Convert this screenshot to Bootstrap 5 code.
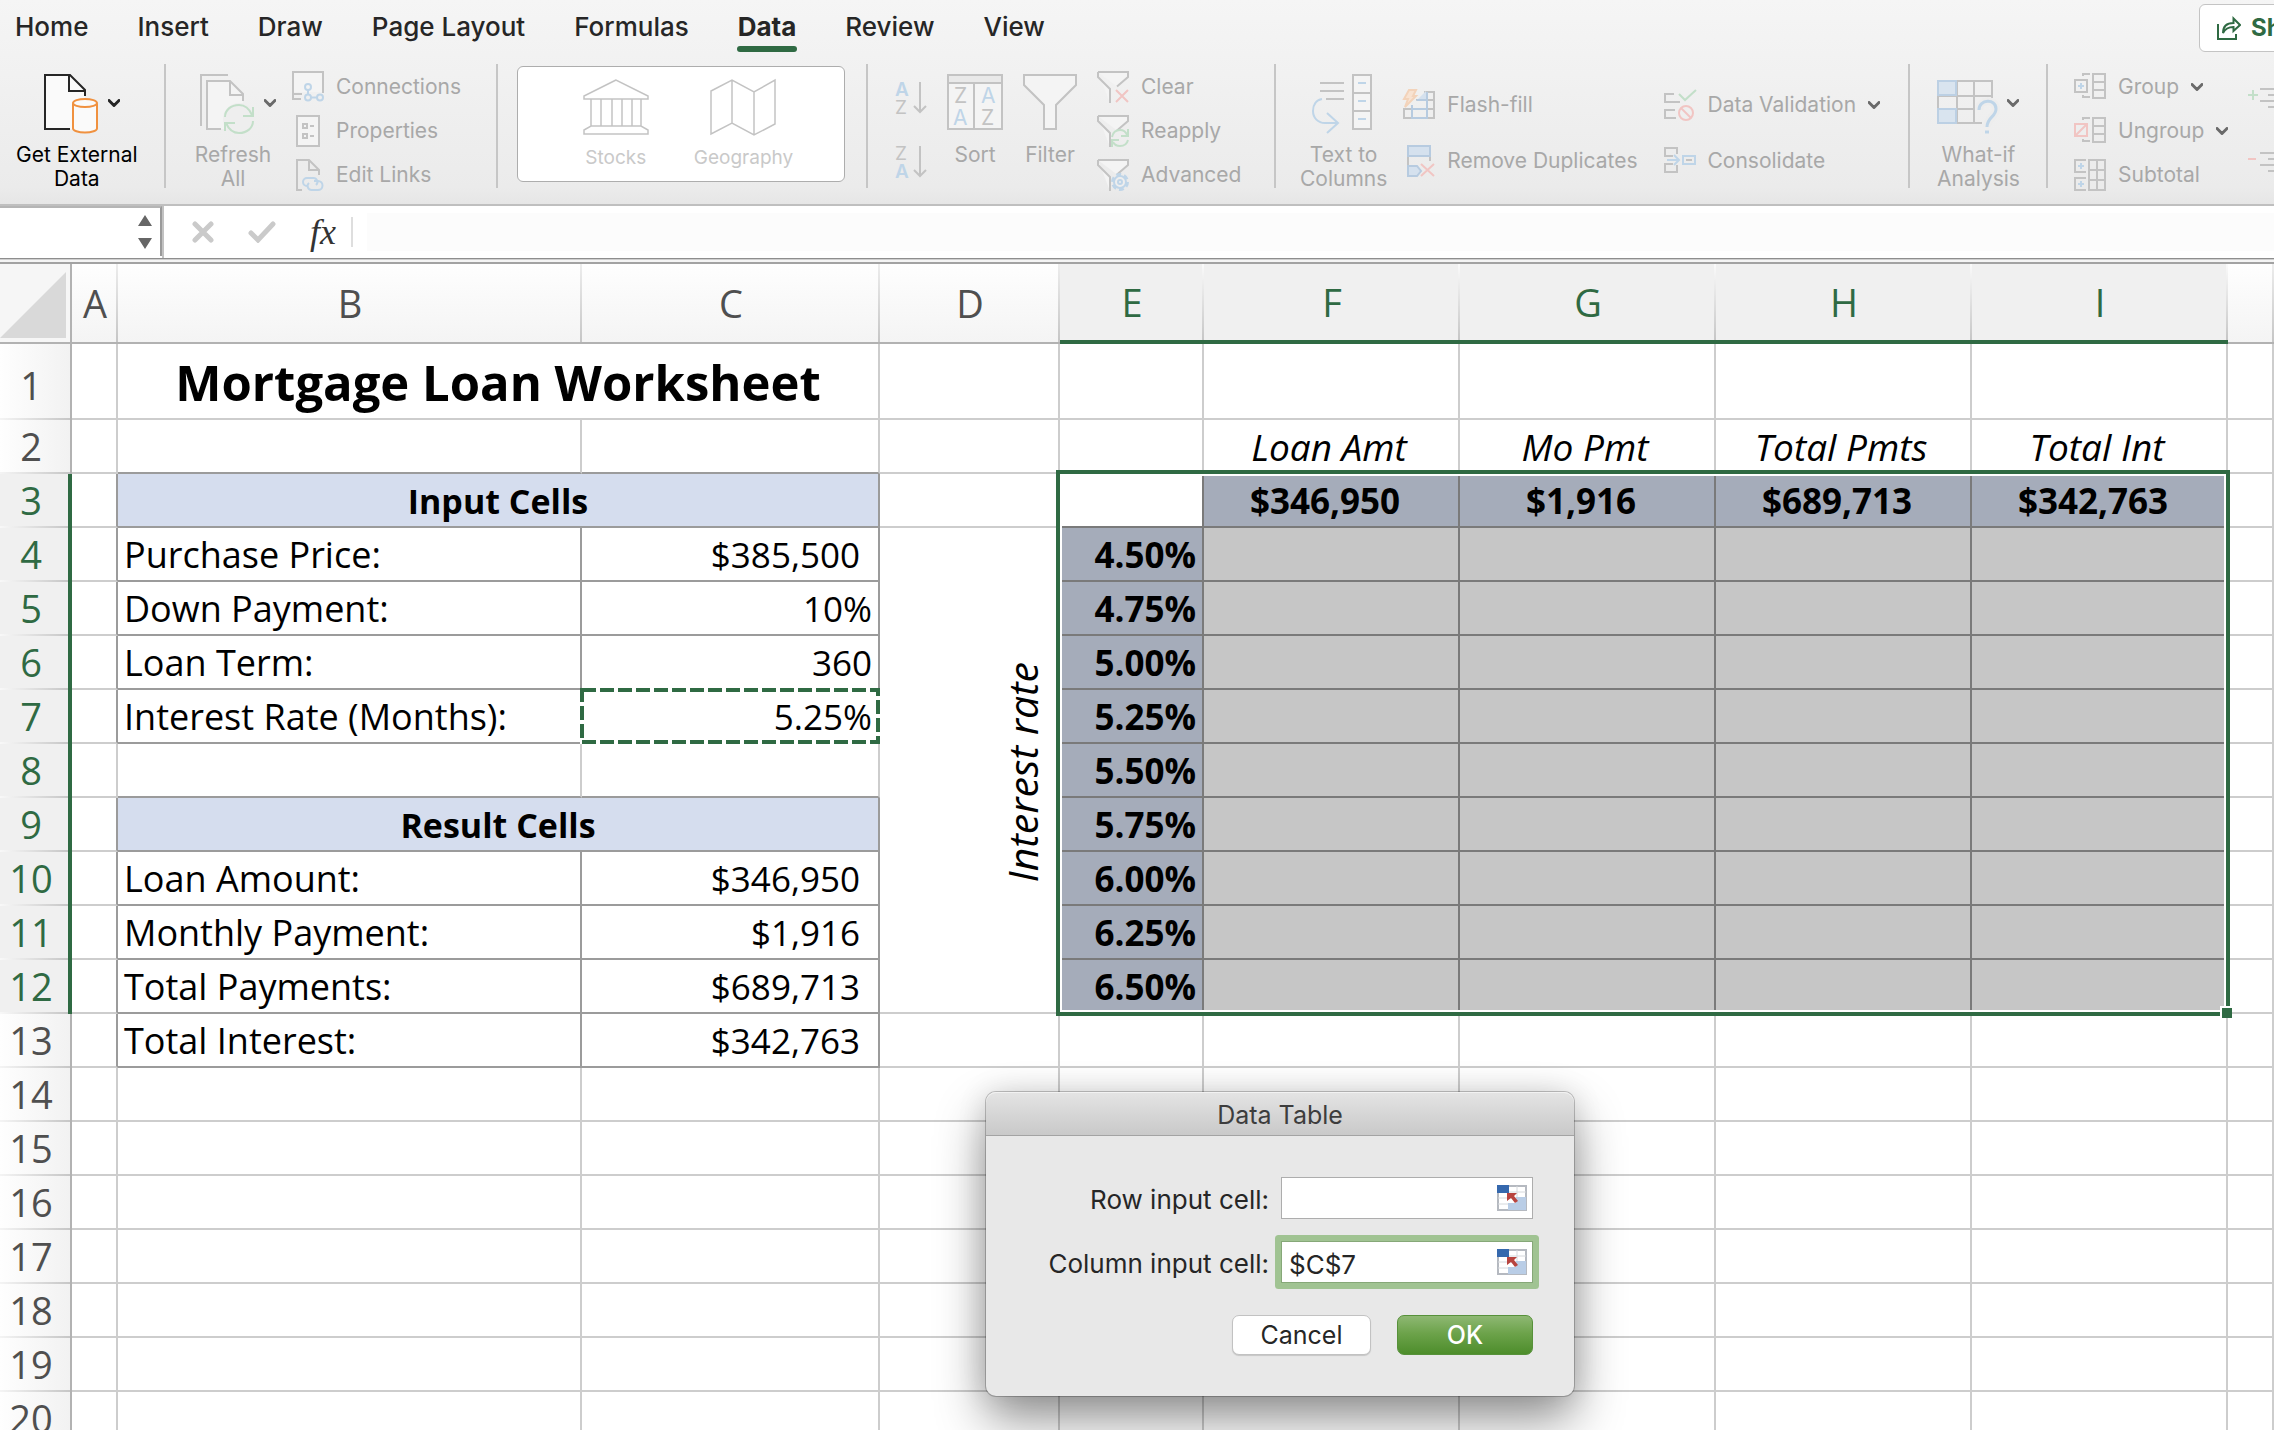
<!DOCTYPE html>
<html lang="en">
<head>
<meta charset="utf-8">
<meta name="viewport" content="width=device-width, initial-scale=1">
<title>Mortgage Loan Worksheet</title>
<link href="https://cdn.jsdelivr.net/npm/bootstrap@5.3.0/dist/css/bootstrap.min.css" rel="stylesheet">
<script src="https://cdn.jsdelivr.net/npm/bootstrap@5.3.0/dist/js/bootstrap.bundle.min.js"></script>
<style>
  :root { --xl: #2f6a43; --off: #a8a8a8; --ico: #c3c3c3; }
  html, body { height: 100%; overflow: hidden; }
  body { font-family: Inter, "Liberation Sans", sans-serif; color: #262626; background: #fff; }
  button { font-family: inherit; }

  /* ribbon */
  .ribbon { background: linear-gradient(#f5f5f5, #f0f0f0 45%, #ebebeb 92%, #e6e6e6); border-bottom: 2px solid #bfbfbf; overflow: hidden; height: 206px; }
  .tabs { height: 64px; gap: 49px; padding-left: 15px; }
  .tabs .nav-link { padding: 0; height: 54px; line-height: 54px; font-size: 26px; font-weight: 500; color: #262626; white-space: nowrap; }
  .tabs .nav-link.active { font-weight: 700; position: relative; }
  .tabs .nav-link.active::after { content: ""; position: absolute; left: -1px; right: -1px; bottom: 2px; height: 6px; border-radius: 3px; background: var(--xl); }
  .share { height: 48px; width: 150px; margin: 4px -75px 0 auto; padding: 0 0 0 17px; gap: 10px; border: 1px solid #c4c4c4; border-radius: 6px; background: #fff; color: var(--xl); font-size: 24px; font-weight: 700; }

  .tools { height: 124px; }
  .grp { border-right: 2px solid #c6c6c6; flex: none; height: 124px; }
  .tool { border: 0; background: none; padding: 0; color: var(--off); font-size: 21px; line-height: 24px; white-space: nowrap; flex: none; text-align: left; }
  .big { display: flex; flex-direction: column; align-items: center; align-self: flex-start; text-align: center; padding-top: 10px; }
  .big .pic { height: 69px; display: flex; gap: 10px; align-items: flex-start; }
  .big .pic .chev { margin-top: 25px; }
  .stack3 { display: flex; flex-direction: column; gap: 12px; }
  .stack3 .tool, .stack2 .tool { display: flex; align-items: center; gap: 12px; height: 32px; }
  .stack2 { display: flex; flex-direction: column; gap: 24px; padding-top: 25px; }
  .stack3 { padding-top: 7px; }
  .on { color: #000; }
  .chev { width: 12px; height: 8px; fill: none; stroke: #6a6a6a; stroke-width: 3; stroke-linecap: round; stroke-linejoin: round; overflow: visible; }
  .on .chev { stroke: #262626; }
  .types { width: 328px; height: 116px; margin: 2px 21px 0 19px; padding-left: 14px; gap: 45px; border: 1px solid #adadad; border-radius: 6px; background: #fff; }
  .types .tool { color: #c9c9c9; font-size: 19px; padding-top: 12px; }
  .types .ic { margin-bottom: 11px; }
  svg { display: block; flex: none; }
  .ic { fill: none; stroke: var(--ico); stroke-width: 2; overflow: visible; }
  .ic text { stroke: none; fill: var(--ico); font-family: Inter, sans-serif; }

  .g1 { width: 166px; padding-left: 16px; }
  .g1 .pic { padding-left: 10px; }
  .g2 { width: 332px; padding-left: 24px; gap: 16px; }
  .g2 .pic { padding-left: 10px; }
  .g3 { width: 370px; }
  .g4 { width: 408px; padding-left: 27px; gap: 20px; }
  .g5 { width: 634px; padding-left: 24px; }
  .g5 .pic { padding-right: 4px; }
  .g6 { width: 138px; padding-left: 27px; }
  .g7 { padding-left: 26px; gap: 20px; }
  .pair { gap: 32px; padding-top: 18px; }

  /* formula bar */
  .fbar { height: 53px; border-bottom: 1px solid #8e8e8e; background: #fff; }
  .namebox { width: 164px; border-right: 2px solid #c2c2c2; }
  .nameinner { height: 50px; border-top: 2px solid #b5b5b5; border-right: 2px solid #9a9a9a; padding-right: 8px; }
  .nameinner input { border: 0; background: none; width: 120px; font-size: 24px; }
  .fbar input:focus { outline: 0; }
  .fxbtn { border: 0; background: none; padding: 0; }
  .fx { font-family: "Liberation Serif", serif; font-weight: 400; font-size: 36px; line-height: 40px; color: #333; }
  .formula { border: 0; background: #fcfcfc; flex: 1 1 0; height: 38px; font-size: 24px; }
  .fsep { width: 2px; height: 30px; background: #dedede; }
  .rail { height: 5px; border-bottom: 2px solid #a2a2a2; border-top: 1px solid #cfcfcf; background: #f4f4f4; }

  /* sheet */
  .sheet { position: relative; font-family: "Open Sans", "Liberation Sans", sans-serif; }
  .gridtab { table-layout: fixed; width: 100%; border-collapse: separate; border-spacing: 0; color: #000; font-size: 35px; line-height: 44px; }
  .gridtab tr { height: 54px; }
  .gridtab td { border-right: 2px solid #cdcdcd; border-bottom: 2px solid #cdcdcd; padding: 2px 6px 0 6px; white-space: nowrap; height: 54px; vertical-align: middle; }
  .gridtab th { font-weight: 400; font-size: 38px; text-align: center; color: #4f4f4f; padding: 0; }
  .gridtab thead tr, .gridtab thead th { height: 80px; }
  .gridtab thead th { background: linear-gradient(#ededed, #c6c6c6) right / 2px 100% no-repeat, linear-gradient(#fefefe, #f4f4f4); border-bottom: 2px solid #b2b2b2; }
  .gridtab thead th.hot { background: linear-gradient(#fafafa, #c6c6c6) right / 2px 100% no-repeat, #f0f0f0; border-bottom: 4px solid var(--xl); color: var(--xl); }
  .gridtab tbody th { padding: 0 8px 2px 0; background: linear-gradient(90deg, #f4f4f4, #c6c6c6) bottom / 100% 2px no-repeat, linear-gradient(90deg, #fefefe, #f2f2f2); border-right: 2px solid #b2b2b2; }
  .gridtab tbody th.hot { background: linear-gradient(90deg, #f8f8f8, #c6c6c6) bottom / 100% 2px no-repeat, #f0f0f0; border-right: 4px solid var(--xl); padding-right: 6px; color: var(--xl); }
  .gridtab tr.tall, .gridtab tr.tall td { height: 76px; }
  .gridtab tr.tall th { padding-top: 8px; }
  .gridtab thead th.corner { border-right: 2px solid #b2b2b2; background: #f6f6f6; vertical-align: bottom; }
  .gridtab .rt { border-right-color: #9b9b9b; }
  .gridtab .bt { border-bottom-color: #9b9b9b; }
  .gridtab .band { background: #d5ddee; font-size: 34px; font-weight: 700; text-align: center; }
  .gridtab .title { font-size: 49px; font-weight: 700; text-align: center; line-height: 60px; }
  .gridtab .lbl { font-size: 36px; }
  .gridtab .num { text-align: right; }
  .gridtab .cur { text-align: right; padding-right: 18px; }
  .gridtab .cap { font-size: 37px; text-align: center; font-style: italic; padding-right: 10px; }
  .gridtab .sel { background: #c6c6c6; border-color: #7a7a7a; }
  .gridtab .key { background: #a5acba; border-color: #7a7a7a; font-weight: 700; text-align: right; }
  .gridtab .keytop { text-align: center; padding-right: 18px; }
  .gridtab .blank { background: #fff; }
  .gridtab .vert { vertical-align: middle; padding: 4px 14px 0 0; }
  .vert span { writing-mode: vertical-rl; transform: rotate(180deg); font-style: italic; font-size: 41px; display: block; margin-left: auto; width: 44px; text-align: center; }
  .ref { position: relative; }
  .ants { position: absolute; left: -2px; top: -2px; overflow: visible; }
  .selbox { position: absolute; left: 1056px; top: 206px; width: 1174px; height: 546px; border: 4px solid var(--xl); box-shadow: inset 0 0 0 2px #fff; pointer-events: none; }
  .selbox::after { content: ""; position: absolute; right: -6px; bottom: -6px; width: 12px; height: 12px; background: var(--xl); border: 2px solid #fff; border-width: 2px 0 0 2px; }

  /* dialog */
  .dlg { position: absolute; left: 986px; top: 828px; width: 588px; height: 304px; border-radius: 10px; background: #e8e8e8; box-shadow: 0 0 0 1px rgba(0,0,0,.22), 0 24px 50px rgba(0,0,0,.42), 0 0 30px rgba(0,0,0,.12); font-family: Inter, "Liberation Sans", sans-serif; font-size: 26px; }
  .dlghead { height: 44px; line-height: 46px; text-align: center; font-size: 25px; font-weight: 400; margin: 0; color: #3d3d3d; border-radius: 10px 10px 0 0; background: linear-gradient(#e4e4e4, #c9c9c9); border-bottom: 1px solid #a3a3a3; box-shadow: inset 0 1px 0 #f2f2f2; }
  .dlgbody { padding: 41px 41px 0 0; }
  .field { display: flex; justify-content: flex-end; align-items: center; gap: 12px; height: 42px; margin-bottom: 22px; }
  .field label { line-height: 42px; padding-top: 4px; }
  .inwrap { position: relative; width: 252px; height: 42px; }
  .inwrap input { width: 252px; height: 42px; border: 1px solid #adadad; border-radius: 0; background: #fff; padding: 4px 44px 0 7px; font-size: 26px; color: #262626; }
  .inwrap input:focus { outline: 0; }
  .inwrap.live input { border-color: #86a878; }
  .inwrap.live { box-shadow: 0 0 0 6px #a0c392; border-radius: 1px; }
  .pick { position: absolute; right: 6px; top: 8px; border: 0; padding: 0; background: none; }
  .acts { display: flex; justify-content: flex-end; gap: 26px; padding-top: 10px; }
  .mbtn { height: 40px; border-radius: 7px; padding: 1px 0 0; font-size: 25px; line-height: 37px; }
  .mcancel { width: 139px; background: #fff; border: 1px solid #c2c2c2; box-shadow: 0 1px 1px rgba(0,0,0,.15); color: #262626; }
  .mok { width: 136px; color: #fff; font-weight: 500; border: 1px solid #57913a; background: linear-gradient(#8eb873, #6da34b 45%, #4d8d2b); }
</style>
</head>
<body class="d-flex flex-column">

<svg width="0" height="0" class="position-absolute" aria-hidden="true">
  <symbol id="chev" viewBox="0 0 12 8"><path d="M1 1.5 6 6.5 11 1.5"/></symbol>
  <symbol id="funnel" viewBox="0 0 32 32"><path fill="#f4f4f4" d="M1 1h30v5L20 15.500M1 1v5l12 12v14"/></symbol>
</svg>

<header class="ribbon flex-shrink-0">
  <nav class="nav tabs flex-nowrap" aria-label="Ribbon tabs">
    <a class="nav-link" href="#">Home</a>
    <a class="nav-link" href="#">Insert</a>
    <a class="nav-link" href="#">Draw</a>
    <a class="nav-link" href="#">Page Layout</a>
    <a class="nav-link" href="#">Formulas</a>
    <a class="nav-link active" href="#" aria-current="page">Data</a>
    <a class="nav-link" href="#">Review</a>
    <a class="nav-link" href="#">View</a>
    <button type="button" class="share d-flex align-items-center flex-shrink-0">
      <svg width="24" height="24" viewBox="0 0 24 24" fill="none" stroke="#2f6a43" stroke-width="2"><path d="M1 8v15h18v-5M6 17c0-7 4-10 10.500-10V2.500L23 9l-6.500 6v-4C11 11 8 13 6 17z"/></svg>
      Share
    </button>
  </nav>

  <div class="tools d-flex">
    <div class="grp g1 d-flex">
      <button type="button" class="tool big on">
        <span class="pic">
          <svg width="54" height="60" viewBox="0 0 54 60" fill="none" stroke-width="2"><path fill="#fafafa" stroke="none" d="M1 1h25l15 15v39H1z"/><path stroke="#262626" d="M26 55H1V1h25l15 15v6M25 1v16h16"/><path fill="#fafafa" stroke="#f0913f" d="M29 29.500v25c0 2 5 4 12 4s12-2 12-4v-25"/><ellipse cx="41" cy="29" rx="12" ry="4" fill="#fafafa" stroke="#f0913f"/></svg>
          <svg class="chev"><use href="#chev"/></svg>
        </span>
        Get External<br>Data
      </button>
    </div>

    <div class="grp g2 d-flex">
      <button type="button" class="tool big" disabled>
        <span class="pic">
          <svg class="ic" width="54" height="60" viewBox="0 0 54 60"><path d="M1 52V1h27"/><path fill="#f4f4f4" stroke="none" d="M7 7h23l13 15v33H7z"/><path d="M21 55H7V7h23l13 13v7M30 7v14h13"/><circle cx="39" cy="45" r="16" fill="#eee" stroke="none"/><path stroke="#c3dfc9" d="M25 43c0-7 6-12 14-12 6 0 10 3 13 10M53 33v9h-10M53 47c0 7-6 12-14 12-6 0-10-3-13-10M25 57v-8h10"/></svg>
          <svg class="chev"><use href="#chev"/></svg>
        </span>
        Refresh<br>All
      </button>
      <div class="stack3">
        <button type="button" class="tool" disabled>
          <svg class="ic" width="32" height="32" viewBox="0 0 32 32"><path fill="#f4f4f4" stroke="none" d="M1 1h30v20H1z"/><path d="M9 28H1V1h30v21M1 23h9"/><g stroke="#bfd5e8"><path d="M16 19v4M19 26.500h6"/><circle cx="16" cy="16" r="3"/><circle cx="16" cy="26.500" r="3"/><circle cx="28" cy="26.500" r="3"/></g></svg>
          Connections
        </button>
        <button type="button" class="tool" disabled>
          <svg class="ic" width="32" height="32" viewBox="0 0 32 32"><path fill="#f4f4f4" d="M5 1h22v30H5z"/><path d="M11 9h4v4h-4zM11 19h4v4h-4zM18 11h4M18 21h4"/></svg>
          Properties
        </button>
        <button type="button" class="tool" disabled>
          <svg class="ic" width="32" height="32" viewBox="0 0 32 32"><path d="M10 31H5V1h12l10 10v5M17 1v10h10"/><g stroke="#bfd5e8"><path d="M16 27h-1a4 4 0 0 1 0-8h6a4 4 0 0 1 3 7M22 22h4a4.500 4.500 0 0 1 0 9h-6a4 4 0 0 1-3-7"/></g></svg>
          Edit Links
        </button>
      </div>
    </div>

    <div class="grp g3">
      <div class="types d-flex justify-content-center">
        <button type="button" class="tool d-flex flex-column align-items-center" disabled>
          <svg class="ic" width="66" height="56" viewBox="0 0 66 56"><path stroke-width="1.500" d="M33 1 1 17v3h64v-3zM1 55v-4l7-4h50l7 4v4zM8 20v27M18 20v27M29 20v27M39 20v27M49 20v27M58 20v27"/></svg>
          <span>Stocks</span>
        </button>
        <button type="button" class="tool d-flex flex-column align-items-center" disabled>
          <svg class="ic" width="66" height="56" viewBox="0 0 66 56"><path stroke-width="1.500" d="M1 12 22 1l22 12L65 1v44L44 56 22 44 1 55zM22 1v43M44 13v43"/></svg>
          <span>Geography</span>
        </button>
      </div>
    </div>

    <div class="grp g4 d-flex">
      <div class="pair d-flex flex-column">
        <button type="button" class="tool" aria-label="Sort ascending" disabled>
          <svg class="ic" width="32" height="32" viewBox="0 0 32 32"><text x="0" y="14" font-size="19" font-weight="600" style="fill:#bfd5e8">A</text><text x="0" y="32" font-size="19">Z</text><path d="M25 0v30M19 24l6 6 6-6"/></svg>
        </button>
        <button type="button" class="tool" aria-label="Sort descending" disabled>
          <svg class="ic" width="32" height="32" viewBox="0 0 32 32"><text x="0" y="14" font-size="19">Z</text><text x="0" y="32" font-size="19" font-weight="600" style="fill:#bfd5e8">A</text><path d="M25 0v30M19 24l6 6 6-6"/></svg>
        </button>
      </div>
      <button type="button" class="tool big" disabled>
        <span class="pic"><svg class="ic" width="56" height="56" viewBox="0 0 56 56"><path fill="#f4f4f4" d="M1 1h54v54H1z"/><path fill="#e9e9e9" d="M1 1h54v8H1zM27 9v46"/><text x="7" y="29" font-size="21">Z</text><text x="6" y="51" font-size="21" style="fill:#bfd5e8">A</text><text x="34" y="29" font-size="21" style="fill:#bfd5e8">A</text><text x="34" y="51" font-size="21">Z</text></svg></span>
        Sort
      </button>
      <button type="button" class="tool big" disabled>
        <span class="pic"><svg class="ic" width="54" height="56" viewBox="0 0 54 56"><path fill="#f4f4f4" d="M1 1h52v10L33 31v24H21V31L1 11z"/></svg></span>
        Filter
      </button>
      <div class="stack3">
        <button type="button" class="tool" disabled>
          <svg class="ic" width="32" height="32" viewBox="0 0 32 32"><use href="#funnel"/><path stroke="#f1c5c3" d="m19 19 12 12M31 19 19 31"/></svg>
          Clear
        </button>
        <button type="button" class="tool" disabled>
          <svg class="ic" width="32" height="32" viewBox="0 0 32 32"><use href="#funnel"/><path stroke="#c3dfc9" d="M15 22c1-5 4-7 8-7 3 0 6 2 7 5M31 14v7h-7M31 25c-1 4-4 6-8 6-3 0-6-2-7-4M15 32v-7h7"/></svg>
          Reapply
        </button>
        <button type="button" class="tool" disabled>
          <svg class="ic" width="32" height="32" viewBox="0 0 32 32"><use href="#funnel"/><circle cx="23" cy="23" r="7.500" stroke="#bfd5e8" stroke-width="3" stroke-dasharray="4.850 3"/><circle cx="23" cy="23" r="6" fill="#eee" stroke="#bfd5e8"/><circle cx="23" cy="23" r="2" stroke="#bfd5e8"/></svg>
          Advanced
        </button>
      </div>
    </div>

    <div class="grp g5 d-flex">
      <button type="button" class="tool big" disabled>
        <span class="pic"><svg class="ic" width="60" height="60" viewBox="0 0 60 60"><path d="M8 9h24M8 17h24M14 25h18"/><path fill="#f4f4f4" d="M41 1h18v54H41zM41 19h18M41 37h18"/><path stroke="#bfd5e8" d="M46 9h8M46 27h8M46 45h8M10 25C4 26 1 31 1 37c0 7 5 12 12 12h13M15 39l11 10-11 10"/></svg></span>
        Text to<br>Columns
      </button>
      <div class="stack2" style="margin-left:16px">
        <button type="button" class="tool" disabled>
          <svg class="ic" width="32" height="32" viewBox="0 0 32 32"><path d="M21 3h10v26H1v-9h30M31 11H13M24 3v26"/><path fill="#d5e1ee" stroke="none" d="M13 12 23 2v9z"/><path stroke="#b7cbe0" d="M9 16v13h15V3M9 20h15M14 11h10"/><path fill="#f8e3d2" stroke="#f3d3ba" d="M6 1h7l-3 6h3L2 18l3-8H1z"/></svg>
          Flash-fill
        </button>
        <button type="button" class="tool" disabled>
          <svg class="ic" width="32" height="32" viewBox="0 0 32 32"><path d="M27 12v4M5 12v9"/><path fill="#d5e1ee" stroke="#b7cbe0" d="M5 1h22v10H5zM14 31H5V21h9l4 5z"/><path stroke="#f1c5c3" d="m18 19 13 12M31 19 18 31"/></svg>
          Remove Duplicates
        </button>
      </div>
      <div class="stack2" style="margin-left:26px">
        <button type="button" class="tool" disabled>
          <svg class="ic" width="32" height="32" viewBox="0 0 32 32"><path d="M10 5H1v8h15M11 21H1v8h11"/><path stroke="#c3dfc9" d="m15 5 6 6L32 1"/><g stroke="#f1c5c3"><circle cx="22" cy="24" r="7"/><path d="m17 19 10 10"/></g></svg>
          Data Validation
          <svg class="chev"><use href="#chev"/></svg>
        </button>
        <button type="button" class="tool" disabled>
          <svg class="ic" width="32" height="32" viewBox="0 0 32 32"><path d="M13 9V3H1v8h8M9 19H1v8h12v-7"/><path stroke="#bfd5e8" d="M3 15h12M10 10l5 5-5 5M19 11h12v8H19z"/><path d="M22 15h6"/></svg>
          Consolidate
        </button>
      </div>
    </div>

    <div class="grp g6 d-flex">
      <button type="button" class="tool big" disabled>
        <span class="pic">
          <svg class="ic" width="60" height="60" viewBox="0 0 60 60"><path d="M1 7h54v17M1 7v42h44M1 22h54M1 35h37M20 7v42M37 7v42"/><path fill="#d9e4ef" stroke="#bcd0e4" d="M1 7h18v14H1zM1 35h18v14H1z"/><path stroke="#ededed" stroke-width="8" d="M42 36c0-11 17-12 17-1 0 8-9 8-9 18"/><path stroke="#bfd5e8" stroke-width="3" d="M42 36c0-11 17-12 17-1 0 8-9 8-9 18M48 58h4"/></svg>
          <svg class="chev"><use href="#chev"/></svg>
        </span>
        What-if<br>Analysis
      </button>
    </div>

    <div class="g7 d-flex">
      <div class="stack3">
        <button type="button" class="tool" disabled>
          <svg class="ic" width="32" height="32" viewBox="0 0 32 32"><path d="M19 3h12v24H19zM19 11h12M19 19h12M1 9h12v12H1zM9 5V3h7M9 24v2h7"/><path stroke="#bfd5e8" d="M4 15h6M7 12v6"/></svg>
          Group
          <svg class="chev"><use href="#chev"/></svg>
        </button>
        <button type="button" class="tool" disabled>
          <svg class="ic" width="32" height="32" viewBox="0 0 32 32"><path d="M19 3h12v24H19zM19 11h12M19 19h12M9 5V3h7M9 24v2h7"/><path stroke="#f1c5c3" d="M1 9h12v12H1zM1 21 13 9"/></svg>
          Ungroup
          <svg class="chev"><use href="#chev"/></svg>
        </button>
        <button type="button" class="tool" disabled>
          <svg class="ic" width="32" height="32" viewBox="0 0 32 32"><path d="M15 1h16v30H15zM15 11h16M15 21h16M23 1v30M12 1H1v12h11M12 19H1v12h11"/><path stroke="#bfd5e8" d="M4 7h6M7 4v6M4 25h6M7 22v6"/></svg>
          Subtotal
        </button>
      </div>
      <div class="pair d-flex flex-column">
        <button type="button" class="tool" aria-label="Show detail" disabled>
          <svg class="ic" width="44" height="32" viewBox="0 0 44 32"><path d="M12 7h30M20 13h22M12 19h30M20 25h22"/><path stroke="#c3dfc9" d="M0 13h10M5 8v10"/></svg>
        </button>
        <button type="button" class="tool" aria-label="Hide detail" disabled>
          <svg class="ic" width="44" height="32" viewBox="0 0 44 32"><path d="M12 7h30M20 13h22M12 19h30M20 25h22"/><path stroke="#f1c5c3" d="M0 13h8"/></svg>
        </button>
      </div>
    </div>
  </div>
</header>

<div class="fbar d-flex flex-shrink-0">
  <div class="namebox flex-shrink-0">
    <div class="nameinner d-flex align-items-center justify-content-between">
      <input type="text" aria-label="Name box">
      <svg width="14" height="34" viewBox="0 0 14 34" fill="#666"><path d="M7 0l7 11H0zM7 34l7-11H0z"/></svg>
    </div>
  </div>
  <div class="d-flex align-items-center flex-grow-1" style="padding-left:28px">
    <button type="button" class="fxbtn" aria-label="Cancel entry"><svg width="22" height="22" viewBox="0 0 22 22" stroke="#cacaca" stroke-width="5" stroke-linecap="round"><path d="m3 3 16 16M19 3 3 19"/></svg></button>
    <button type="button" class="fxbtn" aria-label="Enter" style="margin-left:34px"><svg width="28" height="22" viewBox="0 0 28 22" fill="none" stroke="#cacaca" stroke-width="5" stroke-linecap="round"><path d="m3 12 7 7L25 3"/></svg></button>
    <button type="button" class="fxbtn fx" aria-label="Insert function" style="margin-left:34px"><i>fx</i></button>
    <span class="fsep" style="margin:0 14px 0 15px"></span>
    <input type="text" class="formula" aria-label="Formula">
  </div>
</div>
<div class="rail flex-shrink-0"></div>

<main class="sheet">
  <table class="gridtab">
    <colgroup>
      <col style="width:72px"><col style="width:46px"><col style="width:464px"><col style="width:298px"><col style="width:180px"><col style="width:144px"><col style="width:256px"><col style="width:256px"><col style="width:256px"><col style="width:256px"><col>
    </colgroup>
    <thead>
      <tr><th class="corner" aria-label="Select all"><svg width="66" height="66" viewBox="0 0 66 66" class="mb-1"><path fill="#d9d9d9" d="M66 0v66H0z"/></svg></th><th>A</th><th>B</th><th>C</th><th>D</th><th class="hot">E</th><th class="hot">F</th><th class="hot">G</th><th class="hot">H</th><th class="hot">I</th><th></th></tr>
    </thead>
    <tbody>
      <tr class="tall"><th>1</th><td></td><td colspan="2" class="title">Mortgage Loan Worksheet</td><td></td><td></td><td></td><td></td><td></td><td></td><td></td></tr>
      <tr><th>2</th><td></td><td class="bt"></td><td class="bt"></td><td></td><td></td><td class="cap">Loan Amt</td><td class="cap">Mo Pmt</td><td class="cap">Total Pmts</td><td class="cap">Total Int</td><td></td></tr>
      <tr><th class="hot">3</th><td class="rt"></td><td colspan="2" class="band rt bt">Input Cells</td><td></td><td class="sel blank"></td><td class="key keytop">$346,950</td><td class="key keytop">$1,916</td><td class="key keytop">$689,713</td><td class="key keytop">$342,763</td><td></td></tr>
      <tr><th class="hot">4</th><td class="rt"></td><td class="rt bt lbl">Purchase Price:</td><td class="rt bt cur">$385,500</td><td class="vert" rowspan="9"><span>Interest rate</span></td><td class="key">4.50%</td><td class="sel"></td><td class="sel"></td><td class="sel"></td><td class="sel"></td><td></td></tr>
      <tr><th class="hot">5</th><td class="rt"></td><td class="rt bt lbl">Down Payment:</td><td class="rt bt num">10%</td><td class="key">4.75%</td><td class="sel"></td><td class="sel"></td><td class="sel"></td><td class="sel"></td><td></td></tr>
      <tr><th class="hot">6</th><td class="rt"></td><td class="rt bt lbl">Loan Term:</td><td class="rt bt num">360</td><td class="key">5.00%</td><td class="sel"></td><td class="sel"></td><td class="sel"></td><td class="sel"></td><td></td></tr>
      <tr><th class="hot">7</th><td class="rt"></td><td class="rt bt lbl">Interest Rate (Months):</td><td class="rt bt num ref">5.25%<svg class="ants" width="300" height="56" viewBox="0 0 300 56" fill="none" stroke-width="4" aria-hidden="true"><path stroke="#fff" d="M2 2h296v52H2z"/><path stroke="#2f6a43" stroke-dasharray="14 4" d="M2 2h296v52H2z"/></svg></td><td class="key">5.25%</td><td class="sel"></td><td class="sel"></td><td class="sel"></td><td class="sel"></td><td></td></tr>
      <tr><th class="hot">8</th><td></td><td class="bt"></td><td class="bt"></td><td class="key">5.50%</td><td class="sel"></td><td class="sel"></td><td class="sel"></td><td class="sel"></td><td></td></tr>
      <tr><th class="hot">9</th><td class="rt"></td><td colspan="2" class="band rt bt">Result Cells</td><td class="key">5.75%</td><td class="sel"></td><td class="sel"></td><td class="sel"></td><td class="sel"></td><td></td></tr>
      <tr><th class="hot">10</th><td class="rt"></td><td class="rt bt lbl">Loan Amount:</td><td class="rt bt cur">$346,950</td><td class="key">6.00%</td><td class="sel"></td><td class="sel"></td><td class="sel"></td><td class="sel"></td><td></td></tr>
      <tr><th class="hot">11</th><td class="rt"></td><td class="rt bt lbl">Monthly Payment:</td><td class="rt bt cur">$1,916</td><td class="key">6.25%</td><td class="sel"></td><td class="sel"></td><td class="sel"></td><td class="sel"></td><td></td></tr>
      <tr><th class="hot">12</th><td class="rt"></td><td class="rt bt lbl">Total Payments:</td><td class="rt bt cur">$689,713</td><td class="key">6.50%</td><td class="sel"></td><td class="sel"></td><td class="sel"></td><td class="sel"></td><td></td></tr>
      <tr><th>13</th><td class="rt"></td><td class="rt bt lbl">Total Interest:</td><td class="rt bt cur">$342,763</td><td></td><td></td><td></td><td></td><td></td><td></td><td></td></tr>
      <tr><th>14</th><td></td><td></td><td></td><td></td><td></td><td></td><td></td><td></td><td></td><td></td></tr>
      <tr><th>15</th><td></td><td></td><td></td><td></td><td></td><td></td><td></td><td></td><td></td><td></td></tr>
      <tr><th>16</th><td></td><td></td><td></td><td></td><td></td><td></td><td></td><td></td><td></td><td></td></tr>
      <tr><th>17</th><td></td><td></td><td></td><td></td><td></td><td></td><td></td><td></td><td></td><td></td></tr>
      <tr><th>18</th><td></td><td></td><td></td><td></td><td></td><td></td><td></td><td></td><td></td><td></td></tr>
      <tr><th>19</th><td></td><td></td><td></td><td></td><td></td><td></td><td></td><td></td><td></td><td></td></tr>
      <tr><th>20</th><td></td><td></td><td></td><td></td><td></td><td></td><td></td><td></td><td></td><td></td></tr>
    </tbody>
  </table>
  <div class="selbox"></div>

  <form class="dlg" role="dialog" aria-labelledby="dlgTitle">
    <h2 class="dlghead" id="dlgTitle">Data Table</h2>
    <div class="dlgbody">
      <div class="field">
        <label for="rowCell">Row input cell:</label>
        <div class="inwrap"><input type="text" id="rowCell">
          <button type="button" class="pick" aria-label="Pick row cell"><svg width="30" height="26" viewBox="0 0 30 26"><path fill="#fff" stroke="#b5b9c0" stroke-width="2" d="M1 1h28v24H1z"/><path stroke="#d5d8dc" stroke-width="1" d="M1 13h28M1 19h28M12 7h17M20 1v24"/><path fill="#b9cde6" d="M11 18h8v-6h10v13H11z"/><path fill="#3568ad" d="M0 0h12v8H0z"/><path fill="#b8443f" d="M10 8h10l-3 3 4 5-3 2-4-5-4 3z"/></svg></button>
        </div>
      </div>
      <div class="field">
        <label for="colCell">Column input cell:</label>
        <div class="inwrap live"><input type="text" id="colCell" value="$C$7">
          <button type="button" class="pick" aria-label="Pick column cell"><svg width="30" height="26" viewBox="0 0 30 26"><path fill="#fff" stroke="#b5b9c0" stroke-width="2" d="M1 1h28v24H1z"/><path stroke="#d5d8dc" stroke-width="1" d="M1 13h28M1 19h28M12 7h17M20 1v24"/><path fill="#b9cde6" d="M11 18h8v-6h10v13H11z"/><path fill="#3568ad" d="M0 0h12v8H0z"/><path fill="#b8443f" d="M10 8h10l-3 3 4 5-3 2-4-5-4 3z"/></svg></button>
        </div>
      </div>
      <div class="acts">
        <button type="button" class="mbtn mcancel">Cancel</button>
        <button type="submit" class="mbtn mok">OK</button>
      </div>
    </div>
  </form>
</main>
</body>
</html>
